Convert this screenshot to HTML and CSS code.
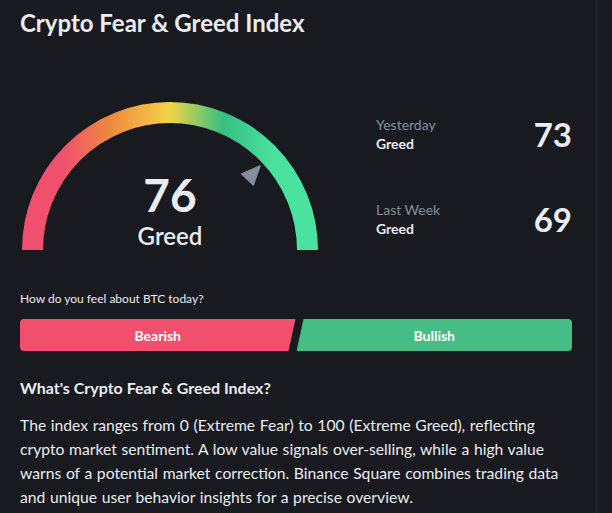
FILE: index.html
```html
<!DOCTYPE html>
<html lang="en">
<head>
<meta charset="utf-8">
<title>Crypto Fear &amp; Greed Index</title>
<link rel="stylesheet" href="styles.css">
</head>
<body>
<main class="panel">
  <h1 class="title">Crypto Fear &amp; Greed Index</h1>

  <section class="overview">
    <div class="gauge">
      <svg class="gauge-svg" width="300" height="150" viewBox="0 0 300 150" aria-hidden="true">
        <defs>
          <linearGradient id="arcGrad" x1="2" y1="0" x2="298" y2="0" gradientUnits="userSpaceOnUse">
            <stop offset="0" stop-color="#f0506e"/>
            <stop offset="0.14" stop-color="#f0506e"/>
            <stop offset="0.3" stop-color="#f0893f"/>
            <stop offset="0.5" stop-color="#f3d447"/>
            <stop offset="0.68" stop-color="#35bf82"/>
            <stop offset="0.85" stop-color="#4be19e"/>
            <stop offset="1" stop-color="#4be19e"/>
          </linearGradient>
        </defs>
        <path d="M 12.5 150 A 137.5 137.5 0 0 1 287.5 150" fill="none" stroke="url(#arcGrad)" stroke-width="21"/>
        <polygon points="221.7,74 240,66 233.3,85" fill="#848e9c" stroke="#848e9c" stroke-width="1.5" stroke-linejoin="round"/>
      </svg>
      <div class="gauge-value">
        <span class="gauge-number">76</span>
        <span class="gauge-label">Greed</span>
      </div>
    </div>

    <div class="history">
      <div class="history-row">
        <div class="history-text">
          <span class="history-when">Yesterday</span>
          <span class="history-state">Greed</span>
        </div>
        <span class="history-num">73</span>
      </div>
      <div class="history-row">
        <div class="history-text">
          <span class="history-when">Last Week</span>
          <span class="history-state">Greed</span>
        </div>
        <span class="history-num">69</span>
      </div>
    </div>
  </section>

  <p class="question">How do you feel about BTC today?</p>
  <div class="vote">
    <button class="vote-btn bearish" type="button">Bearish</button>
    <button class="vote-btn bullish" type="button">Bullish</button>
  </div>

  <section class="about">
    <h2 class="about-title">What's Crypto Fear &amp; Greed Index?</h2>
    <p class="about-text">The index ranges from 0 (Extreme Fear) to 100 (Extreme Greed), reflecting crypto market sentiment. A low value signals over-selling, while a high value warns of a potential market correction. Binance Square combines trading data and unique user behavior insights for a precise overview.</p>
  </section>
</main>
</body>
</html>
```

FILE: styles.css
```css
* {
  box-sizing: border-box;
}

html, body {
  margin: 0;
  padding: 0;
  background: #181a20;
  color: #eaecef;
  font-family: "Lato", "Liberation Sans", sans-serif;
}

.panel {
  width: 597px;
  min-height: 100vh;
  padding: 0 24px 0 20px;
  border-right: 1px solid #2b2f36;
}

.title {
  margin: 0;
  padding-top: 9px;
  font-size: 24px;
  line-height: 28px;
  font-weight: 700;
  color: #eaecef;
}

.overview {
  display: flex;
  margin-top: 63px;
}

.gauge {
  position: relative;
  width: 300px;
  height: 150px;
  flex: none;
}

.gauge-svg {
  display: block;
}

.gauge-value {
  position: absolute;
  left: 0;
  right: 0;
  top: 69px;
  display: flex;
  flex-direction: column;
  align-items: center;
}

.gauge-number {
  font-size: 46px;
  line-height: 52px;
  font-weight: 700;
  color: #eaecef;
}

.gauge-label {
  margin-top: 2px;
  font-size: 24px;
  line-height: 26px;
  font-weight: 600;
  color: #eaecef;
}

.history {
  flex: 1;
  margin-left: 56px;
  padding-top: 16px;
  display: flex;
  flex-direction: column;
  gap: 49px;
}

.history-row {
  display: flex;
  align-items: center;
  justify-content: space-between;
}

.history-text {
  display: flex;
  flex-direction: column;
  gap: 2px;
}

.history-when {
  font-size: 14px;
  line-height: 17px;
  color: #848e9c;
}

.history-state {
  font-size: 14px;
  line-height: 17px;
  font-weight: 700;
  color: #eaecef;
}

.history-num {
  font-size: 33px;
  line-height: 36px;
  font-weight: 700;
  color: #eaecef;
}

.question {
  margin: 41px 0 0;
  font-size: 12px;
  line-height: 16px;
  color: #eaecef;
}

.vote {
  display: flex;
  gap: 1px;
  margin-top: 12px;
  height: 32px;
}

.vote-btn {
  flex: 1;
  border: 0;
  margin: 0;
  padding: 0;
  font-family: inherit;
  font-size: 14px;
  font-weight: 700;
  color: #ffffff;
  cursor: pointer;
}

.bearish {
  background: #f0506e;
  border-radius: 4px 0 0 4px;
  clip-path: polygon(0 0, 100% 0, calc(100% - 7px) 100%, 0 100%);
}

.bullish {
  background: #45bd85;
  border-radius: 0 4px 4px 0;
  clip-path: polygon(7px 0, 100% 0, 100% 100%, 0 100%);
}

.about {
  margin-top: 27px;
}

.about-title {
  margin: 0;
  font-size: 16px;
  line-height: 20px;
  font-weight: 700;
  color: #eaecef;
}

.about-text {
  margin: 15px 0 0;
  font-size: 15.7px;
  line-height: 24px;
  word-spacing: 0.6px;
  color: #eaecef;
}
```
